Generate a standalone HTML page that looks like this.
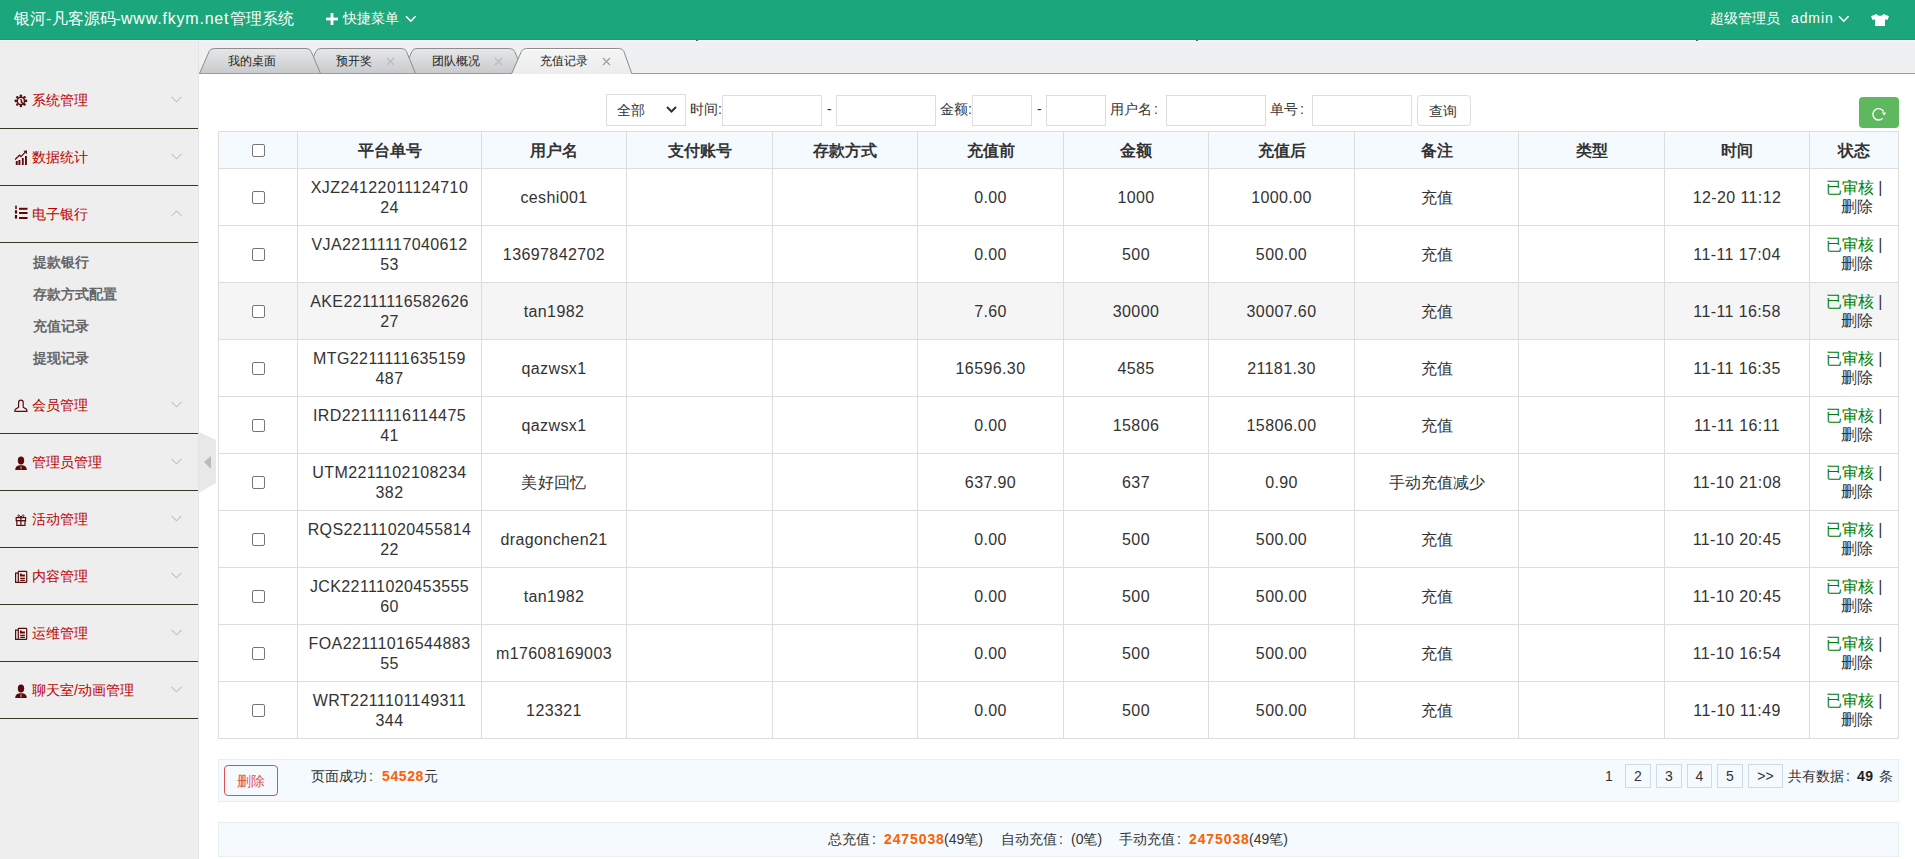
<!DOCTYPE html>
<html><head><meta charset="utf-8">
<style>
*{box-sizing:border-box;margin:0;padding:0}
html,body{width:1915px;height:859px;overflow:hidden;background:#fff;font-family:"Liberation Sans",sans-serif;color:#333}
.a{position:absolute;white-space:nowrap}
#hd{left:0;top:0;width:1915px;height:40px;background:#1ba67b;color:#fff}
.dt{position:absolute;left:0;width:198px;height:57px;border-bottom:1px solid #37371f}
.dtt{position:absolute;left:32px;top:19px;font-size:14px;line-height:18px;color:#bb0000;white-space:nowrap}
.dd{position:absolute;left:33px;font-size:14px;color:#666;font-weight:bold;line-height:18px;white-space:nowrap}
.ch{position:absolute;left:171px;top:24px}
.ic{position:absolute;left:14px;top:22px}
.lbl{position:absolute;font-size:14px;line-height:18px;color:#333;white-space:nowrap}
.inp{position:absolute;top:95px;height:31px;border:1px solid #ddd;background:#fff}
.cell{position:absolute;display:flex;align-items:center;justify-content:center;text-align:center;font-size:16px;line-height:20px;color:#333}
.hl{position:absolute;background:#ddd}
.pg{position:absolute;top:764px;height:24px;border:1px solid #ccdbe4;font-size:14px;line-height:22px;text-align:center;color:#333}
</style></head><body>

<div id="hd" class="a">
<div class="a" style="left:14px;top:9px;font-size:16px;line-height:20px;">银河</div>
<div class="a" style="left:46px;top:9px;font-size:16px;line-height:20px;">-</div>
<div class="a" style="left:52px;top:9px;font-size:16px;line-height:20px;">凡客源码</div>
<div class="a" style="left:115.5px;top:9px;font-size:16px;line-height:20px;">-</div>
<div class="a" style="left:121px;top:9px;font-size:16px;line-height:20px;letter-spacing:0.8px">www.fkym.net</div>
<div class="a" style="left:230px;top:9px;font-size:16px;line-height:20px;">管理系统</div>
<svg class="a" style="left:326px;top:13px" width="12" height="12"><rect x="4.6" y="0" width="2.8" height="12" fill="#fff"/><rect x="0" y="4.6" width="12" height="2.8" fill="#fff"/></svg>
<div class="a" style="left:343px;top:9px;font-size:14px;line-height:18px">快捷菜单</div>
<svg class="a" style="left:405px;top:15px" width="12" height="8"><path d="M1 1.2 L5.8 6.2 L10.6 1.2" fill="none" stroke="#fff" stroke-width="1.6"/></svg>
<div class="a" style="left:1710px;top:9px;font-size:14px;line-height:18px">超级管理员</div>
<div class="a" style="left:1791px;top:9px;font-size:14px;line-height:18px;letter-spacing:0.9px">admin</div>
<svg class="a" style="left:1838px;top:15px" width="12" height="8"><path d="M1 1.2 L5.8 6.2 L10.6 1.2" fill="none" stroke="#fff" stroke-width="1.6"/></svg>
<svg class="a" style="left:1871px;top:14px" width="18" height="12"><path d="M5.5 0 L0 2.2 L1.6 6 L4 5.2 L4 12 L14 12 L14 5.2 L16.4 6 L18 2.2 L12.5 0 C11.5 2.4 6.5 2.4 5.5 0 Z" fill="#fff"/></svg>
</div>
<div class="a" style="left:0;top:39px;width:1915px;height:1px;background:#0ba371"></div>
<div class="a" style="left:0;top:40px;width:1915px;height:1px;background:#fcf0f5"></div>
<div class="a" style="left:696px;top:40px;width:2px;height:1px;background:#7a5a60"></div>
<div class="a" style="left:1196px;top:40px;width:2px;height:1px;background:#7a5a60"></div>
<div class="a" style="left:1696px;top:40px;width:2px;height:1px;background:#7a5a60"></div>
<div class="a" style="left:0;top:41px;width:199px;height:818px;background:#eeeeee;border-right:1px solid #e4e4e4"></div>
<div class="dt" style="top:72px"><div class="dtt">系统管理</div><svg class="ch" width="11" height="7"><path d="M0.5 0.8 L5.5 5.8 L10.5 0.8" fill="none" stroke="#bcc1c9" stroke-width="1.05"/></svg></div>
<svg class="a" style="left:14px;top:94px" width="14" height="14" viewBox="0 0 14 14"><g fill="#5a0a0a"><circle cx="6.9" cy="1.8" r="1.3"/><circle cx="6.9" cy="12" r="1.3"/><circle cx="1.8" cy="6.9" r="1.3"/><circle cx="12" cy="6.9" r="1.3"/><circle cx="3.3" cy="3.3" r="1.2"/><circle cx="10.5" cy="3.3" r="1.2"/><circle cx="3.3" cy="10.5" r="1.2"/><circle cx="10.5" cy="10.5" r="1.3"/></g><circle cx="6.9" cy="6.9" r="3.6" fill="none" stroke="#5a0a0a" stroke-width="1.4"/><path d="M6.2 5.6 C7.6 5.6 8.2 7 7.2 8 L10.6 10.8" fill="none" stroke="#5a0a0a" stroke-width="1.3"/></svg>
<div class="dt" style="top:129px"><div class="dtt">数据统计</div><svg class="ch" width="11" height="7"><path d="M0.5 0.8 L5.5 5.8 L10.5 0.8" fill="none" stroke="#bcc1c9" stroke-width="1.05"/></svg></div>
<svg class="a" style="left:14px;top:150px" width="14" height="15" viewBox="0 0 14 15"><g fill="#5a0a0a"><rect x="1.8" y="11" width="1.9" height="4"/><rect x="4.4" y="10" width="2" height="5"/><rect x="7.9" y="8" width="1.8" height="7"/><rect x="11" y="6" width="1.9" height="9"/><path d="M9.4 0.8 L13 0.6 L12.8 4.2 Z"/></g><path d="M1.1 9.5 L5.6 5.2 L7 6.6 L11.6 1.8" fill="none" stroke="#5a0a0a" stroke-width="1.2"/></svg>
<div class="dt" style="top:186px"><div class="dtt">电子银行</div><svg class="ch" width="11" height="7"><path d="M0.5 6 L5.5 1 L10.5 6" fill="none" stroke="#bcc1c9" stroke-width="1.05"/></svg></div>
<svg class="a" style="left:14px;top:205px" width="14" height="16" viewBox="0 0 14 16"><g fill="#5a0a0a"><rect x="1.2" y="0.6" width="1.6" height="3.4"/><rect x="0.9" y="5.2" width="2.2" height="3.4"/><rect x="0.9" y="10" width="2.2" height="3.6"/><rect x="5" y="2.8" width="8.5" height="2"/><rect x="5" y="7" width="8.5" height="2"/><rect x="5" y="12" width="8.5" height="2"/></g></svg>
<div class="dt" style="top:377px"><div class="dtt">会员管理</div><svg class="ch" width="11" height="7"><path d="M0.5 0.8 L5.5 5.8 L10.5 0.8" fill="none" stroke="#bcc1c9" stroke-width="1.05"/></svg></div>
<svg class="a" style="left:14px;top:399px" width="14" height="14" viewBox="0 0 14 14"><path d="M4.6 8.2 L4.6 3.2 Q4.6 1.1 6.9 1.1 Q9.2 1.1 9.2 3.2 L9.2 8.2 L12.4 10.2 Q12.9 10.8 12.9 12.4 L0.9 12.4 Q0.9 10.8 1.4 10.2 Z" fill="none" stroke="#5a0a0a" stroke-width="1.2"/></svg>
<div class="dt" style="top:434px"><div class="dtt">管理员管理</div><svg class="ch" width="11" height="7"><path d="M0.5 0.8 L5.5 5.8 L10.5 0.8" fill="none" stroke="#bcc1c9" stroke-width="1.05"/></svg></div>
<svg class="a" style="left:14px;top:456px" width="14" height="15" viewBox="0 0 14 15"><g fill="#5a0a0a"><ellipse cx="7" cy="4.6" rx="3.2" ry="4"/><path d="M1.2 14 C1.2 10.6 3.4 9.6 5.4 9.2 L8.6 9.2 C10.6 9.6 12.8 10.6 12.8 14 Z"/></g><rect x="6.5" y="10.2" width="1" height="3" fill="#d8b0a0"/></svg>
<div class="dt" style="top:491px"><div class="dtt">活动管理</div><svg class="ch" width="11" height="7"><path d="M0.5 0.8 L5.5 5.8 L10.5 0.8" fill="none" stroke="#bcc1c9" stroke-width="1.05"/></svg></div>
<svg class="a" style="left:14px;top:514px" width="14" height="13" viewBox="0 0 14 13"><g fill="none" stroke="#5a0a0a" stroke-width="1.2"><rect x="2.2" y="3.6" width="9.4" height="3"/><rect x="2.8" y="6.6" width="8.2" height="4.8"/><path d="M6.9 3.6 L6.9 11.4"/></g><path d="M6.9 3.4 C6 1 4.2 0.6 3.8 1.4 C3.4 2.2 4.4 3.2 6.9 3.4 C9.4 3.2 10.4 2.2 10 1.4 C9.6 0.6 7.8 1 6.9 3.4" fill="none" stroke="#5a0a0a" stroke-width="1"/></svg>
<div class="dt" style="top:548px"><div class="dtt">内容管理</div><svg class="ch" width="11" height="7"><path d="M0.5 0.8 L5.5 5.8 L10.5 0.8" fill="none" stroke="#bcc1c9" stroke-width="1.05"/></svg></div>
<svg class="a" style="left:14px;top:570px" width="14" height="14" viewBox="0 0 14 14"><g fill="none" stroke="#5a0a0a" stroke-width="1.2"><rect x="4.3" y="1.4" width="8.4" height="10.9" rx="0.6"/><path d="M4.3 3.2 L1.6 3.2 L1.6 12.3 L4.3 12.3"/><path d="M6.2 8.4 L10.9 8.4 M6.2 10.4 L10.9 10.4"/></g><path d="M6 3.4 L7.6 3.4 L7.6 4.6 L10.9 4.6 L10.9 6.4 L6 6.4 Z" fill="#5a0a0a"/></svg>
<div class="dt" style="top:605px"><div class="dtt">运维管理</div><svg class="ch" width="11" height="7"><path d="M0.5 0.8 L5.5 5.8 L10.5 0.8" fill="none" stroke="#bcc1c9" stroke-width="1.05"/></svg></div>
<svg class="a" style="left:14px;top:627px" width="14" height="14" viewBox="0 0 14 14"><g fill="none" stroke="#5a0a0a" stroke-width="1.2"><rect x="4.3" y="1.4" width="8.4" height="10.9" rx="0.6"/><path d="M4.3 3.2 L1.6 3.2 L1.6 12.3 L4.3 12.3"/><path d="M6.2 8.4 L10.9 8.4 M6.2 10.4 L10.9 10.4"/></g><path d="M6 3.4 L7.6 3.4 L7.6 4.6 L10.9 4.6 L10.9 6.4 L6 6.4 Z" fill="#5a0a0a"/></svg>
<div class="dt" style="top:662px"><div class="dtt">聊天室/动画管理</div><svg class="ch" width="11" height="7"><path d="M0.5 0.8 L5.5 5.8 L10.5 0.8" fill="none" stroke="#bcc1c9" stroke-width="1.05"/></svg></div>
<svg class="a" style="left:14px;top:684px" width="14" height="15" viewBox="0 0 14 15"><g fill="#5a0a0a"><ellipse cx="7" cy="4.6" rx="3.2" ry="4"/><path d="M1.2 14 C1.2 10.6 3.4 9.6 5.4 9.2 L8.6 9.2 C10.6 9.6 12.8 10.6 12.8 14 Z"/></g><rect x="6.5" y="10.2" width="1" height="3" fill="#d8b0a0"/></svg>
<div class="dd" style="top:253px">提款银行</div>
<div class="dd" style="top:285px">存款方式配置</div>
<div class="dd" style="top:317px">充值记录</div>
<div class="dd" style="top:349px">提现记录</div>
<div class="a" style="left:199px;top:41px;width:1716px;height:33px;background:#eff0f2"></div>
<svg class="a" style="left:0;top:0" width="1915" height="80"><defs><linearGradient id="g1" x1="0" y1="0" x2="0" y2="1"><stop offset="0" stop-color="#e6e7e8"/><stop offset="1" stop-color="#c9cacc"/></linearGradient><linearGradient id="g2" x1="0" y1="0" x2="0" y2="1"><stop offset="0" stop-color="#f4f5f5"/><stop offset="1" stop-color="#ececec"/></linearGradient></defs><path d="M402.5 73.5 L411.8 51.5 Q413.0 48.5 417.0 48.5 L509.5 48.5 Q513.5 48.5 514.7 51.5 L524.0 73.5 Z" fill="url(#g1)"/><path d="M402.5 73.5 L411.8 51.5 Q413.0 48.5 417.0 48.5 L509.5 48.5 Q513.5 48.5 514.7 51.5 L524.0 73.5" fill="none" stroke="#8c8c8c" stroke-width="1"/><path d="M306.5 73.5 L315.8 51.5 Q317.0 48.5 321.0 48.5 L401.3 48.5 Q405.3 48.5 406.5 51.5 L415.5 73.5 Z" fill="url(#g1)"/><path d="M306.5 73.5 L315.8 51.5 Q317.0 48.5 321.0 48.5 L401.3 48.5 Q405.3 48.5 406.5 51.5 L415.5 73.5" fill="none" stroke="#8c8c8c" stroke-width="1"/><path d="M199.5 73.5 L209.1 51.5 Q210.3 48.5 214.3 48.5 L306.0 48.5 Q310.0 48.5 311.2 51.5 L320.5 73.5 Z" fill="url(#g1)"/><path d="M199.5 73.5 L209.1 51.5 Q210.3 48.5 214.3 48.5 L306.0 48.5 Q310.0 48.5 311.2 51.5 L320.5 73.5" fill="none" stroke="#8c8c8c" stroke-width="1"/><rect x="199" y="73" width="1716" height="1" fill="#9a9a9a"/><path d="M511.7 74.0 L521.4 51.5 Q522.6 48.5 526.6 48.5 L618.7 48.5 Q622.7 48.5 623.9 51.5 L631.8 74.0 Z" fill="url(#g2)"/><path d="M511.7 73.5 L521.4 51.5 Q522.6 48.5 526.6 48.5 L618.7 48.5 Q622.7 48.5 623.9 51.5 L631.8 73.5" fill="none" stroke="#8c8c8c" stroke-width="1"/><path d="M525.6 49.6 L619.7 49.6" stroke="#fff" stroke-width="1"/></svg>
<div class="a" style="left:199px;top:74px;width:1716px;height:785px;background:#fff"></div>
<div class="a" style="left:228px;top:53px;font-size:12px;line-height:16px;color:#222">我的桌面</div>
<div class="a" style="left:336px;top:53px;font-size:12px;line-height:16px;color:#222">预开奖</div>
<div class="a" style="left:432px;top:53px;font-size:12px;line-height:16px;color:#222">团队概况</div>
<div class="a" style="left:540px;top:53px;font-size:12px;line-height:16px;color:#222">充值记录</div>
<svg class="a" style="left:386px;top:57px" width="9" height="9"><path d="M1 1 L8 8 M8 1 L1 8" stroke="#b4bcc6" stroke-width="1.2"/></svg>
<svg class="a" style="left:494px;top:57px" width="9" height="9"><path d="M1 1 L8 8 M8 1 L1 8" stroke="#b4bcc6" stroke-width="1.2"/></svg>
<svg class="a" style="left:602px;top:57px" width="9" height="9"><path d="M1 1 L8 8 M8 1 L1 8" stroke="#9a9fa6" stroke-width="1.2"/></svg>
<svg class="a" style="left:199px;top:432px" width="18" height="62"><path d="M0 0 L17 8 L17 51 L0 61 Z" fill="#e8e8e8"/><path d="M5 30 L12 24 L12 37 Z" fill="#bbbbbb"/></svg>
<div class="a" style="left:606px;top:94px;width:80px;height:32px;border:1px solid #ddd;background:#fff"></div>
<div class="lbl" style="left:617px;top:101px;margin-top:0">全部</div>
<svg class="a" style="left:666px;top:105.5px" width="11" height="7"><path d="M1 1 L5.5 5.5 L10 1" fill="none" stroke="#333" stroke-width="2"/></svg>
<div class="lbl" style="left:690px;top:100px">时间:</div>
<div class="inp" style="left:722px;width:100px"></div>
<div class="lbl" style="left:827px;top:100px">-</div>
<div class="inp" style="left:836px;width:100px"></div>
<div class="lbl" style="left:940px;top:100px">金额:</div>
<div class="inp" style="left:972px;width:60px"></div>
<div class="lbl" style="left:1037px;top:100px">-</div>
<div class="inp" style="left:1046px;width:60px"></div>
<div class="lbl" style="left:1110px;top:100px">用户名<span style="margin-left:2px">:</span></div>
<div class="inp" style="left:1166px;width:100px"></div>
<div class="lbl" style="left:1270px;top:100px">单号<span style="margin-left:2px">:</span></div>
<div class="inp" style="left:1312px;width:100px"></div>
<div class="a" style="left:1417px;top:95px;width:54px;height:31px;border:1px solid #ddd;border-radius:4px;background:#fff"></div>
<div class="lbl" style="left:1429px;top:102px">查询</div>
<div class="a" style="left:1859px;top:97px;width:40px;height:31px;border-radius:4px;background:#5eb95e"></div>
<svg class="a" style="left:1871px;top:106px" width="16" height="16" viewBox="0 0 16 16"><path d="M11.66 12.37 A5.7 5.7 0 1 1 12.6 5.6" fill="none" stroke="#fff" stroke-width="1.4"/><path d="M10.6 6.6 L15.2 6.4 L13.4 9.4 Z" fill="#fff"/></svg>
<div class="a" style="left:218px;top:131px;width:1681px;height:37px;background:#f5fafe"></div>
<div class="a" style="left:218px;top:282px;width:1681px;height:57px;background:#f5f5f5"></div>
<div class="hl" style="left:218px;top:131px;width:1px;height:608px"></div>
<div class="hl" style="left:297px;top:131px;width:1px;height:608px"></div>
<div class="hl" style="left:481px;top:131px;width:1px;height:608px"></div>
<div class="hl" style="left:626px;top:131px;width:1px;height:608px"></div>
<div class="hl" style="left:772px;top:131px;width:1px;height:608px"></div>
<div class="hl" style="left:917px;top:131px;width:1px;height:608px"></div>
<div class="hl" style="left:1063px;top:131px;width:1px;height:608px"></div>
<div class="hl" style="left:1208px;top:131px;width:1px;height:608px"></div>
<div class="hl" style="left:1354px;top:131px;width:1px;height:608px"></div>
<div class="hl" style="left:1518px;top:131px;width:1px;height:608px"></div>
<div class="hl" style="left:1664px;top:131px;width:1px;height:608px"></div>
<div class="hl" style="left:1809px;top:131px;width:1px;height:608px"></div>
<div class="hl" style="left:1898px;top:131px;width:1px;height:608px"></div>
<div class="hl" style="left:218px;top:131px;width:1681px;height:1px"></div>
<div class="hl" style="left:218px;top:168px;width:1681px;height:1px"></div>
<div class="hl" style="left:218px;top:225px;width:1681px;height:1px"></div>
<div class="hl" style="left:218px;top:282px;width:1681px;height:1px"></div>
<div class="hl" style="left:218px;top:339px;width:1681px;height:1px"></div>
<div class="hl" style="left:218px;top:396px;width:1681px;height:1px"></div>
<div class="hl" style="left:218px;top:453px;width:1681px;height:1px"></div>
<div class="hl" style="left:218px;top:510px;width:1681px;height:1px"></div>
<div class="hl" style="left:218px;top:567px;width:1681px;height:1px"></div>
<div class="hl" style="left:218px;top:624px;width:1681px;height:1px"></div>
<div class="hl" style="left:218px;top:681px;width:1681px;height:1px"></div>
<div class="hl" style="left:218px;top:738px;width:1681px;height:1px"></div>
<div class="a" style="left:252px;top:144px;width:13px;height:13px;border:1px solid #767676;border-radius:2px;background:#fff"></div>
<div class="cell" style="left:298px;top:133px;width:183px;height:36px;font-weight:bold">平台单号</div>
<div class="cell" style="left:482px;top:133px;width:144px;height:36px;font-weight:bold">用户名</div>
<div class="cell" style="left:627px;top:133px;width:145px;height:36px;font-weight:bold">支付账号</div>
<div class="cell" style="left:773px;top:133px;width:144px;height:36px;font-weight:bold">存款方式</div>
<div class="cell" style="left:918px;top:133px;width:145px;height:36px;font-weight:bold">充值前</div>
<div class="cell" style="left:1064px;top:133px;width:144px;height:36px;font-weight:bold">金额</div>
<div class="cell" style="left:1209px;top:133px;width:145px;height:36px;font-weight:bold">充值后</div>
<div class="cell" style="left:1355px;top:133px;width:163px;height:36px;font-weight:bold">备注</div>
<div class="cell" style="left:1519px;top:133px;width:145px;height:36px;font-weight:bold">类型</div>
<div class="cell" style="left:1665px;top:133px;width:144px;height:36px;font-weight:bold">时间</div>
<div class="cell" style="left:1810px;top:133px;width:88px;height:36px;font-weight:bold">状态</div>
<div class="a" style="left:252px;top:191px;width:13px;height:13px;border:1px solid #767676;border-radius:2px;background:#fff"></div>
<div class="cell" style="left:298px;top:170px;width:183px;height:56px;line-height:20px;letter-spacing:0.4px;">XJZ24122011124710<br>24</div>
<div class="cell" style="left:482px;top:170px;width:144px;height:56px;letter-spacing:0.4px;">ceshi001</div>
<div class="cell" style="left:918px;top:170px;width:145px;height:56px;letter-spacing:0.4px;">0.00</div>
<div class="cell" style="left:1064px;top:170px;width:144px;height:56px;letter-spacing:0.4px;">1000</div>
<div class="cell" style="left:1209px;top:170px;width:145px;height:56px;letter-spacing:0.4px;">1000.00</div>
<div class="cell" style="left:1355px;top:170px;width:163px;height:56px;">充值</div>
<div class="cell" style="left:1665px;top:170px;width:144px;height:56px;letter-spacing:0.4px;">12-20 11:12</div>
<div class="cell" style="left:1810px;top:169px;width:88px;height:56px;line-height:19px"><div><span style="color:#008000">已审核</span> |<br><span style="padding-left:6px">删除</span></div></div>
<div class="a" style="left:252px;top:248px;width:13px;height:13px;border:1px solid #767676;border-radius:2px;background:#fff"></div>
<div class="cell" style="left:298px;top:227px;width:183px;height:56px;line-height:20px;letter-spacing:0.4px;">VJA22111117040612<br>53</div>
<div class="cell" style="left:482px;top:227px;width:144px;height:56px;letter-spacing:0.4px;">13697842702</div>
<div class="cell" style="left:918px;top:227px;width:145px;height:56px;letter-spacing:0.4px;">0.00</div>
<div class="cell" style="left:1064px;top:227px;width:144px;height:56px;letter-spacing:0.4px;">500</div>
<div class="cell" style="left:1209px;top:227px;width:145px;height:56px;letter-spacing:0.4px;">500.00</div>
<div class="cell" style="left:1355px;top:227px;width:163px;height:56px;">充值</div>
<div class="cell" style="left:1665px;top:227px;width:144px;height:56px;letter-spacing:0.4px;">11-11 17:04</div>
<div class="cell" style="left:1810px;top:226px;width:88px;height:56px;line-height:19px"><div><span style="color:#008000">已审核</span> |<br><span style="padding-left:6px">删除</span></div></div>
<div class="a" style="left:252px;top:305px;width:13px;height:13px;border:1px solid #767676;border-radius:2px;background:#fff"></div>
<div class="cell" style="left:298px;top:284px;width:183px;height:56px;line-height:20px;letter-spacing:0.4px;">AKE22111116582626<br>27</div>
<div class="cell" style="left:482px;top:284px;width:144px;height:56px;letter-spacing:0.4px;">tan1982</div>
<div class="cell" style="left:918px;top:284px;width:145px;height:56px;letter-spacing:0.4px;">7.60</div>
<div class="cell" style="left:1064px;top:284px;width:144px;height:56px;letter-spacing:0.4px;">30000</div>
<div class="cell" style="left:1209px;top:284px;width:145px;height:56px;letter-spacing:0.4px;">30007.60</div>
<div class="cell" style="left:1355px;top:284px;width:163px;height:56px;">充值</div>
<div class="cell" style="left:1665px;top:284px;width:144px;height:56px;letter-spacing:0.4px;">11-11 16:58</div>
<div class="cell" style="left:1810px;top:283px;width:88px;height:56px;line-height:19px"><div><span style="color:#008000">已审核</span> |<br><span style="padding-left:6px">删除</span></div></div>
<div class="a" style="left:252px;top:362px;width:13px;height:13px;border:1px solid #767676;border-radius:2px;background:#fff"></div>
<div class="cell" style="left:298px;top:341px;width:183px;height:56px;line-height:20px;letter-spacing:0.4px;">MTG2211111635159<br>487</div>
<div class="cell" style="left:482px;top:341px;width:144px;height:56px;letter-spacing:0.4px;">qazwsx1</div>
<div class="cell" style="left:918px;top:341px;width:145px;height:56px;letter-spacing:0.4px;">16596.30</div>
<div class="cell" style="left:1064px;top:341px;width:144px;height:56px;letter-spacing:0.4px;">4585</div>
<div class="cell" style="left:1209px;top:341px;width:145px;height:56px;letter-spacing:0.4px;">21181.30</div>
<div class="cell" style="left:1355px;top:341px;width:163px;height:56px;">充值</div>
<div class="cell" style="left:1665px;top:341px;width:144px;height:56px;letter-spacing:0.4px;">11-11 16:35</div>
<div class="cell" style="left:1810px;top:340px;width:88px;height:56px;line-height:19px"><div><span style="color:#008000">已审核</span> |<br><span style="padding-left:6px">删除</span></div></div>
<div class="a" style="left:252px;top:419px;width:13px;height:13px;border:1px solid #767676;border-radius:2px;background:#fff"></div>
<div class="cell" style="left:298px;top:398px;width:183px;height:56px;line-height:20px;letter-spacing:0.4px;">IRD22111116114475<br>41</div>
<div class="cell" style="left:482px;top:398px;width:144px;height:56px;letter-spacing:0.4px;">qazwsx1</div>
<div class="cell" style="left:918px;top:398px;width:145px;height:56px;letter-spacing:0.4px;">0.00</div>
<div class="cell" style="left:1064px;top:398px;width:144px;height:56px;letter-spacing:0.4px;">15806</div>
<div class="cell" style="left:1209px;top:398px;width:145px;height:56px;letter-spacing:0.4px;">15806.00</div>
<div class="cell" style="left:1355px;top:398px;width:163px;height:56px;">充值</div>
<div class="cell" style="left:1665px;top:398px;width:144px;height:56px;letter-spacing:0.4px;">11-11 16:11</div>
<div class="cell" style="left:1810px;top:397px;width:88px;height:56px;line-height:19px"><div><span style="color:#008000">已审核</span> |<br><span style="padding-left:6px">删除</span></div></div>
<div class="a" style="left:252px;top:476px;width:13px;height:13px;border:1px solid #767676;border-radius:2px;background:#fff"></div>
<div class="cell" style="left:298px;top:455px;width:183px;height:56px;line-height:20px;letter-spacing:0.4px;">UTM2211102108234<br>382</div>
<div class="cell" style="left:482px;top:455px;width:144px;height:56px;letter-spacing:0.4px;">美好回忆</div>
<div class="cell" style="left:918px;top:455px;width:145px;height:56px;letter-spacing:0.4px;">637.90</div>
<div class="cell" style="left:1064px;top:455px;width:144px;height:56px;letter-spacing:0.4px;">637</div>
<div class="cell" style="left:1209px;top:455px;width:145px;height:56px;letter-spacing:0.4px;">0.90</div>
<div class="cell" style="left:1355px;top:455px;width:163px;height:56px;">手动充值减少</div>
<div class="cell" style="left:1665px;top:455px;width:144px;height:56px;letter-spacing:0.4px;">11-10 21:08</div>
<div class="cell" style="left:1810px;top:454px;width:88px;height:56px;line-height:19px"><div><span style="color:#008000">已审核</span> |<br><span style="padding-left:6px">删除</span></div></div>
<div class="a" style="left:252px;top:533px;width:13px;height:13px;border:1px solid #767676;border-radius:2px;background:#fff"></div>
<div class="cell" style="left:298px;top:512px;width:183px;height:56px;line-height:20px;letter-spacing:0.4px;">RQS22111020455814<br>22</div>
<div class="cell" style="left:482px;top:512px;width:144px;height:56px;letter-spacing:0.4px;">dragonchen21</div>
<div class="cell" style="left:918px;top:512px;width:145px;height:56px;letter-spacing:0.4px;">0.00</div>
<div class="cell" style="left:1064px;top:512px;width:144px;height:56px;letter-spacing:0.4px;">500</div>
<div class="cell" style="left:1209px;top:512px;width:145px;height:56px;letter-spacing:0.4px;">500.00</div>
<div class="cell" style="left:1355px;top:512px;width:163px;height:56px;">充值</div>
<div class="cell" style="left:1665px;top:512px;width:144px;height:56px;letter-spacing:0.4px;">11-10 20:45</div>
<div class="cell" style="left:1810px;top:511px;width:88px;height:56px;line-height:19px"><div><span style="color:#008000">已审核</span> |<br><span style="padding-left:6px">删除</span></div></div>
<div class="a" style="left:252px;top:590px;width:13px;height:13px;border:1px solid #767676;border-radius:2px;background:#fff"></div>
<div class="cell" style="left:298px;top:569px;width:183px;height:56px;line-height:20px;letter-spacing:0.4px;">JCK22111020453555<br>60</div>
<div class="cell" style="left:482px;top:569px;width:144px;height:56px;letter-spacing:0.4px;">tan1982</div>
<div class="cell" style="left:918px;top:569px;width:145px;height:56px;letter-spacing:0.4px;">0.00</div>
<div class="cell" style="left:1064px;top:569px;width:144px;height:56px;letter-spacing:0.4px;">500</div>
<div class="cell" style="left:1209px;top:569px;width:145px;height:56px;letter-spacing:0.4px;">500.00</div>
<div class="cell" style="left:1355px;top:569px;width:163px;height:56px;">充值</div>
<div class="cell" style="left:1665px;top:569px;width:144px;height:56px;letter-spacing:0.4px;">11-10 20:45</div>
<div class="cell" style="left:1810px;top:568px;width:88px;height:56px;line-height:19px"><div><span style="color:#008000">已审核</span> |<br><span style="padding-left:6px">删除</span></div></div>
<div class="a" style="left:252px;top:647px;width:13px;height:13px;border:1px solid #767676;border-radius:2px;background:#fff"></div>
<div class="cell" style="left:298px;top:626px;width:183px;height:56px;line-height:20px;letter-spacing:0.4px;">FOA22111016544883<br>55</div>
<div class="cell" style="left:482px;top:626px;width:144px;height:56px;letter-spacing:0.4px;">m17608169003</div>
<div class="cell" style="left:918px;top:626px;width:145px;height:56px;letter-spacing:0.4px;">0.00</div>
<div class="cell" style="left:1064px;top:626px;width:144px;height:56px;letter-spacing:0.4px;">500</div>
<div class="cell" style="left:1209px;top:626px;width:145px;height:56px;letter-spacing:0.4px;">500.00</div>
<div class="cell" style="left:1355px;top:626px;width:163px;height:56px;">充值</div>
<div class="cell" style="left:1665px;top:626px;width:144px;height:56px;letter-spacing:0.4px;">11-10 16:54</div>
<div class="cell" style="left:1810px;top:625px;width:88px;height:56px;line-height:19px"><div><span style="color:#008000">已审核</span> |<br><span style="padding-left:6px">删除</span></div></div>
<div class="a" style="left:252px;top:704px;width:13px;height:13px;border:1px solid #767676;border-radius:2px;background:#fff"></div>
<div class="cell" style="left:298px;top:683px;width:183px;height:56px;line-height:20px;letter-spacing:0.4px;">WRT2211101149311<br>344</div>
<div class="cell" style="left:482px;top:683px;width:144px;height:56px;letter-spacing:0.4px;">123321</div>
<div class="cell" style="left:918px;top:683px;width:145px;height:56px;letter-spacing:0.4px;">0.00</div>
<div class="cell" style="left:1064px;top:683px;width:144px;height:56px;letter-spacing:0.4px;">500</div>
<div class="cell" style="left:1209px;top:683px;width:145px;height:56px;letter-spacing:0.4px;">500.00</div>
<div class="cell" style="left:1355px;top:683px;width:163px;height:56px;">充值</div>
<div class="cell" style="left:1665px;top:683px;width:144px;height:56px;letter-spacing:0.4px;">11-10 11:49</div>
<div class="cell" style="left:1810px;top:682px;width:88px;height:56px;line-height:19px"><div><span style="color:#008000">已审核</span> |<br><span style="padding-left:6px">删除</span></div></div>
<div class="a" style="left:218px;top:759px;width:1681px;height:43px;background:#f5fafe;border:1px solid #e8eef2"></div>
<div class="a" style="left:224px;top:765px;width:54px;height:31px;border:1px solid #dd514c;border-radius:4px;background:#fff0"></div>
<div class="a" style="left:237px;top:772px;font-size:14px;line-height:18px;color:#dd514c">删除</div>
<div class="a" style="left:311px;top:767px;font-size:14px;line-height:18px;color:#333">页面成功<span style="margin-left:2px">:</span></div>
<div class="a" style="left:382px;top:767px;font-size:14px;line-height:18px;color:#ff6000;font-weight:bold;letter-spacing:0.6px">54528</div>
<div class="a" style="left:424px;top:767px;font-size:14px;line-height:18px;color:#333">元</div>
<div class="a" style="left:1605px;top:767px;font-size:14px;line-height:18px;color:#333">1</div>
<div class="pg" style="left:1625px;width:26px">2</div>
<div class="pg" style="left:1656px;width:26px">3</div>
<div class="pg" style="left:1687px;width:25px">4</div>
<div class="pg" style="left:1717px;width:26px">5</div>
<div class="pg" style="left:1748px;width:35px">&gt;&gt;</div>
<div class="a" style="left:1788px;top:767px;font-size:14px;line-height:18px;color:#333">共有数据<span style="margin-left:2px">:</span></div>
<div class="a" style="left:1857px;top:767px;font-size:14px;line-height:18px;color:#222;font-weight:bold;letter-spacing:0.5px">49</div>
<div class="a" style="left:1879px;top:767px;font-size:14px;line-height:18px;color:#333">条</div>
<div class="a" style="left:218px;top:822px;width:1681px;height:35px;background:#f5fafe;border:1px solid #e8eef2"></div>
<div class="a" style="left:828px;top:830px;font-size:14px;line-height:18px;">总充值<span style="margin-left:2px">:</span></div>
<div class="a" style="left:884px;top:830px;font-size:14px;line-height:18px;color:#ff6000;font-weight:bold;letter-spacing:0.9px;">2475038</div>
<div class="a" style="left:944px;top:830px;font-size:14px;line-height:18px;">(49笔)</div>
<div class="a" style="left:1001px;top:830px;font-size:14px;line-height:18px;">自动充值<span style="margin-left:2px">:</span></div>
<div class="a" style="left:1071px;top:830px;font-size:14px;line-height:18px;">(0笔)</div>
<div class="a" style="left:1119px;top:830px;font-size:14px;line-height:18px;">手动充值<span style="margin-left:2px">:</span></div>
<div class="a" style="left:1189px;top:830px;font-size:14px;line-height:18px;color:#ff6000;font-weight:bold;letter-spacing:0.9px;">2475038</div>
<div class="a" style="left:1249px;top:830px;font-size:14px;line-height:18px;">(49笔)</div>
</body></html>
